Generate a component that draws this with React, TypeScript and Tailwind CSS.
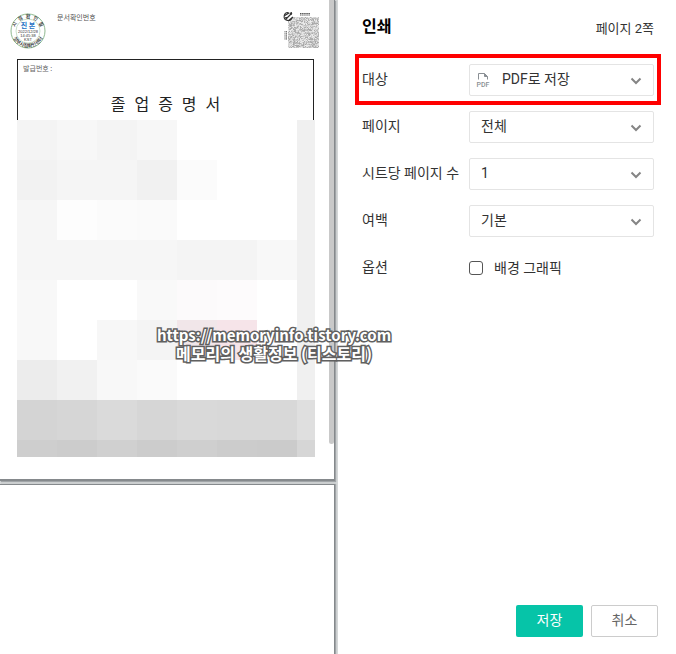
import type { ReactNode } from "react";

const mosaic: string[][] = [
  ["#f4f4f4", "#f7f7f7", "#f4f4f4", "#f7f7f7", "#ffffff", "#ffffff", "#ffffff", "#f0f0f0"],
  ["#f2f2f2", "#f5f5f5", "#f5f5f5", "#f1f1f1", "#fbfbfb", "#ffffff", "#ffffff", "#f0f0f0"],
  ["#f6f6f6", "#fdfdfd", "#fbfbfb", "#fafafa", "#ffffff", "#ffffff", "#ffffff", "#f0f0f0"],
  ["#f6f6f6", "#f6f6f6", "#f6f6f6", "#f6f6f6", "#f4f4f4", "#f4f4f4", "#f8f8f8", "#f0f0f0"],
  ["#f8f8f8", "#ffffff", "#ffffff", "#f9f9f9", "#fcfafb", "#fdfbfc", "#ffffff", "#f0f0f0"],
  ["#f8f8f8", "#ffffff", "#f7f7f7", "#f4f4f4", "#f1e6e9", "#f6e4e9", "#ffffff", "#f0f0f0"],
  ["#ececec", "#f1f1f1", "#f8f8f8", "#fafafa", "#ffffff", "#ffffff", "#ffffff", "#f0f0f0"],
  ["#d4d4d4", "#d6d6d6", "#dadada", "#d6d6d6", "#d9d9d9", "#d8d8d8", "#d8d8d8", "#dfdfdf"],
  ["#cecece", "#cccccc", "#d0d0d0", "#cccccc", "#cfcfcf", "#cccccc", "#cbcbcb", "#d6d6d6"],
];

function makeNoise(size: number): number[] {
  let seed = 7;
  return Array.from({ length: size * size }, () => {
    seed = (seed * 16807) % 2147483647;
    return 165 + Math.floor((seed / 2147483647) * 75);
  });
}

const codeSize = 31;
const codeCells = makeNoise(codeSize);

function Stamp() {
  return (
    <svg className="size-9 shrink-0" viewBox="0 0 36 36" fontFamily="'Noto Sans CJK KR', sans-serif">
      <defs>
        <path id="stamp-top" d="M5 18a13 13 0 0 1 26 0" />
        <path id="stamp-bottom" d="M1.500 18a16.500 16.500 0 0 0 33 0" />
      </defs>
      <circle cx="18" cy="18" r="17" fill="none" stroke="#8fb98f" />
      <circle cx="18" cy="18" r="12" fill="none" stroke="#b5d3b5" strokeWidth="0.7" />
      <text fontSize="5" fontWeight="500" fill="#222">
        <textPath href="#stamp-top" startOffset="50%" textAnchor="middle">
          {"시\u2002점\u2002확\u2002인\u2002필"}
        </textPath>
      </text>
      <text fontSize="5" fontWeight="500" fill="#222">
        <textPath href="#stamp-bottom" startOffset="50%" textAnchor="middle">
          정부시점확인센터
        </textPath>
      </text>
      <text x="18" y="15" fontSize="7" fontWeight="700" fill="#2272c3" textAnchor="middle">
        진 본
      </text>
      <g fontSize="4" fill="#333" textAnchor="middle" fontFamily="'Liberation Sans', sans-serif">
        <text x="18" y="20">2022/12/28</text>
        <text x="18" y="24">14:45:38</text>
        <text x="18" y="28">KST</text>
      </g>
    </svg>
  );
}

function SecurityCode() {
  return (
    <svg className="h-[38px] w-[38px] shrink-0" viewBox="0 0 38 38">
      {codeCells.map((shade, i) => (
        <rect
          key={i}
          x={6 + (i % codeSize)}
          y={6 + Math.floor(i / codeSize)}
          width="1"
          height="1"
          fill={`rgb(${shade},${shade},${shade})`}
        />
      ))}
      <path d="M5 5h7l-7 7z" fill="#fff" />
      <path d="M6.500 1.500a4 4 0 1 0 3.500 5M2 5l5-3M4 8l6-6M6 10l5-4" fill="none" stroke="#333" strokeWidth="1.100" />
      <path d="M7 2l3-1v3zM3 6h3l-2 3z" fill="#333" />
      <path d="M18 2.500h10M18 4h10" stroke="#555" strokeWidth="1" strokeDasharray="1.500 .6" />
      <path d="M3 20v9M4.500 20v9" stroke="#777" strokeWidth="1" strokeDasharray="1.500 .6" />
    </svg>
  );
}

function Preview() {
  return (
    <section aria-label="미리보기" className="flex w-1/2 shrink-0 flex-col bg-[#d4d7d8]">
      <div className="relative mr-[3px] border-r border-b-2 border-[#85898c] bg-white pb-[22px] font-['Noto_Sans_CJK_KR',sans-serif] shadow-[1px_1px_1px_#a0a4a7]">
        <div className="flex h-[59px] items-start pt-[11px] pr-[14px] pl-[10px]">
          <div className="pt-[2px]">
            <Stamp />
          </div>
          <span className="ml-[11px] flex-1 text-[7px] leading-3 text-[#555]">문서확인번호</span>
          <SecurityCode />
        </div>
        <div className="mr-5 ml-[17px] h-[61px] border border-b-0 border-[#222] px-[5px] pt-1">
          <p className="text-[7px] leading-2 text-[#666]">발급번호 :</p>
          <h1 className="flex justify-center gap-[9px] pt-[19px] text-[16px] leading-6 text-[#222]">
            {["졸", "업", "증", "명", "서"].map((syllable) => (
              <span key={syllable}>{syllable}</span>
            ))}
          </h1>
        </div>
        <div className="mr-[19px] ml-[17px]">
          {mosaic.map((row, r) => (
            <div
              key={r}
              className={`grid grid-cols-[repeat(7,40fr)_18fr] ${r === mosaic.length - 1 ? "h-[17px]" : "h-10"}`}
            >
              {row.map((color, c) => (
                <span key={c} style={{ backgroundColor: color }} />
              ))}
            </div>
          ))}
        </div>
        <div className="absolute top-0 right-0 h-[444px] w-[5px] rounded-b-sm bg-[#c9c9c9]" />
      </div>
      <div className="mt-[3px] mr-[3px] flex-1 border-t border-r border-[#85898c] bg-white shadow-[1px_0_1px_#a0a4a7]" />
    </section>
  );
}

function PdfIcon() {
  return (
    <svg className="pointer-events-none z-10 col-start-1 row-start-1 ml-[6px] size-4" viewBox="0 0 16 16" fill="none">
      <path d="M3.500 7.500v-6h6l3 3v3M9.500 1.500v3h3" stroke="#8a8f94" strokeWidth="1" />
      <path d="M9.500 1.500l3 3h-3z" fill="#8a8f94" />
      <text x="8" y="15" fontSize="7" fontWeight="500" fill="#8a8f94" textAnchor="middle" fontFamily="Roboto, sans-serif">
        PDF
      </text>
    </svg>
  );
}

interface RowProps {
  id: string;
  label: string;
  value: string;
  icon?: ReactNode;
  highlighted?: boolean;
}

function SelectRow({ id, label, value, icon, highlighted }: RowProps) {
  return (
    <div
      className={`flex items-center ${highlighted ? "border-4 border-[#ff0000] px-[3px] pt-[6px] pb-[5px]" : "mb-[15px] px-[7px]"}`}
    >
      <label htmlFor={id} className="w-[107px] shrink-0 pb-[2px] whitespace-nowrap">
        {label}
      </label>
      <div className="grid flex-1 items-center">
        {icon}
        <select
          id={id}
          className={`col-start-1 row-start-1 h-8 w-full appearance-none rounded-xs border border-[#e4e4e4] bg-white pb-[3px] text-[#333] ${icon ? "pl-8" : "pl-[11px]"}`}
        >
          <option>{value}</option>
        </select>
        <svg
          className="pointer-events-none col-start-1 row-start-1 mt-[2px] mr-3 h-2 w-3 justify-self-end"
          viewBox="0 0 12 8"
          fill="none"
          stroke="#858585"
          strokeWidth="2"
        >
          <path d="M1.500 1.500L6 6l4.500-4.500" />
        </svg>
      </div>
    </div>
  );
}

export default function App() {
  return (
    <div className="relative flex min-h-screen bg-white font-[Roboto,'Noto_Sans_CJK_KR',sans-serif] text-sm leading-5 text-[#333]">
      <Preview />
      <form className="flex flex-1 flex-col pr-[15px] pl-[17px]" onSubmit={(e) => e.preventDefault()}>
        <header className="flex h-[54px] items-center justify-between px-[7px]">
          <h2 className="text-base font-bold text-black">인쇄</h2>
          <span className="pt-1 text-[13px]">페이지 2쪽</span>
        </header>
        <SelectRow id="target" label="대상" value="PDF로 저장" icon={<PdfIcon />} highlighted />
        <div className="pt-[6px]">
          <SelectRow id="pages" label="페이지" value="전체" />
          <SelectRow id="per-sheet" label="시트당 페이지 수" value="1" />
          <SelectRow id="margins" label="여백" value="기본" />
        </div>
        <fieldset className="flex items-center px-[7px] pt-[5px]">
          <span className="w-[107px] shrink-0 pb-[2px]">옵션</span>
          <input
            id="background"
            type="checkbox"
            className="size-[14px] appearance-none rounded-[3px] border border-[#555] bg-white checked:bg-[#06c4a8]"
          />
          <label htmlFor="background" className="pl-[11px]">
            배경 그래픽
          </label>
        </fieldset>
        <footer className="mt-auto flex justify-end gap-2 pr-[3px] pb-[17px]">
          <button type="submit" className="h-8 w-[67px] rounded-xs bg-[#06c4a8] pb-[2px] text-white">
            저장
          </button>
          <button type="button" className="h-8 w-[67px] rounded-xs border border-[#ccc] bg-white pb-[2px] text-[#666]">
            취소
          </button>
        </footer>
      </form>
      <div className="pointer-events-none absolute top-[326px] left-[154px] w-[240px] text-center font-['Noto_Sans_CJK_KR',sans-serif] leading-[18px] font-bold whitespace-nowrap text-white [-webkit-text-stroke:3px_#606060] [paint-order:stroke_fill]">
        <p className="text-[15px]">https://memoryinfo.tistory.com</p>
        <p className="text-[16px]">메모리의 생활정보 (티스토리)</p>
      </div>
    </div>
  );
}
